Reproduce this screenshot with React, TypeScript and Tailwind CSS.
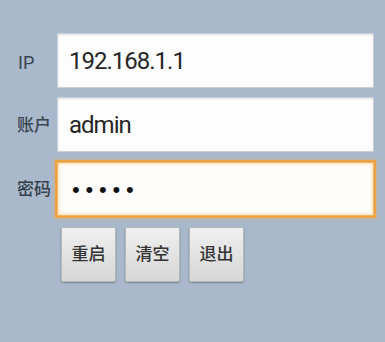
const font = { fontFamily: 'Roboto, "Noto Sans CJK SC", sans-serif' };

const fields = [
  { label: 'IP', value: '192.168.1.1', cls: 'text-[18px] font-normal pl-[1px]' },
  { label: '账户', value: 'admin', cls: 'text-[17px] font-medium' },
];

export default function App() {
  return (
    <div
      className="w-[385px] h-[342px] bg-[#a9b9cb] pt-[33px] pl-[17px] pr-[11px] flex flex-col"
      style={font}
    >
      <div className="flex flex-col gap-[9px]">
        {fields.map((f) => (
          <div key={f.label} className="flex items-center">
            <span className={`w-[40px] text-[#3a4552] pt-[3px] ${f.cls}`}>{f.label}</span>
            <div className="flex-1 h-[55px] bg-[#fdfdfd] border border-[#c9d0d8] shadow-[inset_0_1px_2px_rgba(0,0,0,0.12)] flex items-center pl-[11px]">
              <span className="text-[24px] tracking-[-1px] text-[#262626]">{f.value}</span>
            </div>
          </div>
        ))}
        <div className="flex items-center mt-[1px]">
          <span className="w-[40px] text-[17px] font-medium text-[#34404c] pt-[2px]">密码</span>
          <div className="flex-1 h-[54px] bg-[#fffdfb] border border-[#f3b460] shadow-[0_0_0_2px_#eda244,0_0_3px_3px_rgba(240,170,80,0.45),inset_0_0_4px_rgba(250,190,110,0.7)] flex items-center pl-[14px]">
            <span
              className="text-[22px] tracking-[5.8px] text-[#111]"
              style={{ fontFamily: '"Liberation Sans", sans-serif' }}
            >
              •••••
            </span>
          </div>
        </div>
      </div>
      <div className="flex gap-[9px] mt-[11px] pl-[44px]">
        {['重启', '清空', '退出'].map((b) => (
          <button
            key={b}
            className="w-[55px] h-[55px] rounded-[2px] bg-gradient-to-b from-[#f0f0f0] to-[#d6d6d6] border border-[#b3b8bd] shadow-[0_1px_2px_rgba(0,0,0,0.3)] text-[17px] font-medium text-[#333]"
          >
            {b}
          </button>
        ))}
      </div>
    </div>
  );
}
